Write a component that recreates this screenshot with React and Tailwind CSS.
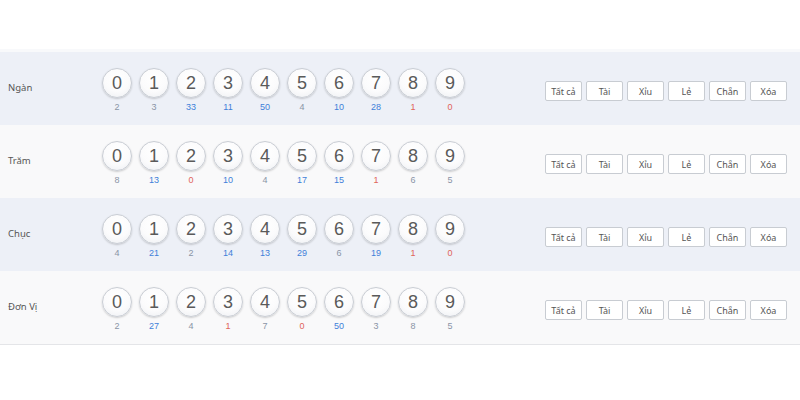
const rows = [
  { label: "Ngàn", counts: [2, 3, 33, 11, 50, 4, 10, 28, 1, 0], bg: "bg-[#edf0f7]" },
  { label: "Trăm", counts: [8, 13, 0, 10, 4, 17, 15, 1, 6, 5], bg: "bg-[#f9f9fa]" },
  { label: "Chục", counts: [4, 21, 2, 14, 13, 29, 6, 19, 1, 0], bg: "bg-[#edf0f7]" },
  { label: "Đơn Vị", counts: [2, 27, 4, 1, 7, 0, 50, 3, 8, 5], bg: "bg-[#f9f9fa]" },
];

const buttons = ["Tất cả", "Tài", "Xỉu", "Lẻ", "Chẵn", "Xóa"];

function countColor(n) {
  if (n <= 1) return "text-[#e0645a]";
  if (n >= 10) return "text-[#3f7fd9]";
  return "text-[#8a94a6]";
}

function Ball({ digit, count }) {
  return (
    <div className="flex flex-col items-center w-[30px]">
      <div className="w-[30px] h-[30px] rounded-full border border-[#c9cdd4] bg-[radial-gradient(circle_at_50%_35%,#ffffff_0%,#fbfbfc_55%,#eceef2_100%)] shadow-[0_1px_2px_rgba(0,0,0,0.18)] flex items-center justify-center text-[18px] leading-none text-[#5a5a5a]">
        {digit}
      </div>
      <div className={`mt-[3px] text-[9px] leading-[12px] ${countColor(count)}`}>{count}</div>
    </div>
  );
}

export default function App() {
  return (
    <div className="w-[800px] h-[400px] bg-white font-['Liberation_Sans',Arial,sans-serif]">
      <div className="h-[49px]" />
      <div className="pt-[3px] bg-[#f8f9fb] border-b border-[#e4e5e8]">
        {rows.map((row) => (
          <div key={row.label} className={`flex items-start h-[73px] ${row.bg}`}>
            <div className="w-[102px] pl-[8px] pt-[30px] font-['Noto_Sans',sans-serif] text-[9.5px] leading-[12px] text-[#555]">
              {row.label}
            </div>
            <div className="flex gap-[7px] pt-[16px]">
              {row.counts.map((c, i) => (
                <Ball key={i} digit={i} count={c} />
              ))}
            </div>
            <div className="ml-auto pr-[13px] pt-[29px] flex gap-[4px]">
              {buttons.map((b) => (
                <button
                  key={b}
                  className="w-[37px] h-[20px] bg-white border border-[#c8ccd2] rounded-[2px] font-['Noto_Sans',sans-serif] text-[9px] text-[#555] leading-none flex items-center justify-center"
                >
                  {b}
                </button>
              ))}
            </div>
          </div>
        ))}
      </div>
    </div>
  );
}
